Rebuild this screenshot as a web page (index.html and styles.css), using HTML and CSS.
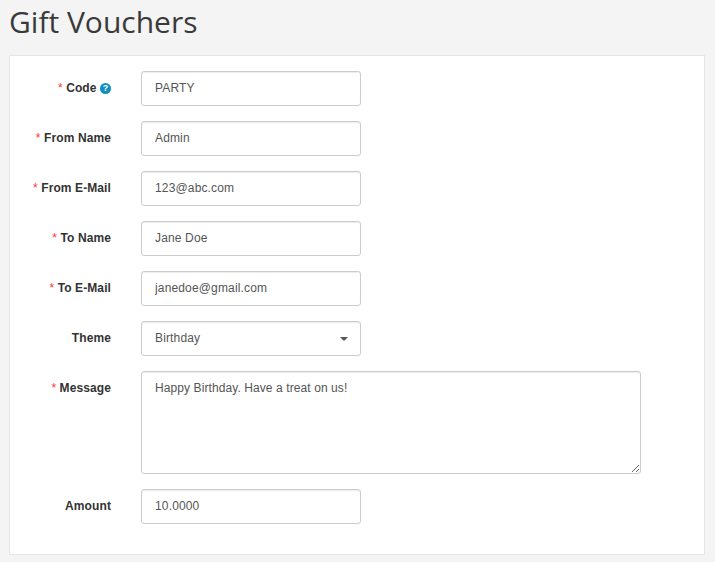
FILE: index.html
```html
<!DOCTYPE html>
<html lang="en">
<head>
  <meta charset="UTF-8" />
  <meta name="viewport" content="width=device-width, initial-scale=1.0" />
  <title>Gift Vouchers</title>
  <link rel="stylesheet" href="styles.css">
</head>
<body>
  <h1>Gift Vouchers</h1>
  <form class="panel">
    <div class="form-group">
      <label class="required" for="code">Code <span class="help">?</span></label>
      <input type="text" id="code" value="PARTY" />
    </div>
    <div class="form-group">
      <label class="required" for="fromName">From Name</label>
      <input type="text" id="fromName" value="Admin" />
    </div>
    <div class="form-group">
      <label class="required" for="fromEmail">From E-Mail</label>
      <input type="text" id="fromEmail" value="123@abc.com" />
    </div>
    <div class="form-group">
      <label class="required" for="toName">To Name</label>
      <input type="text" id="toName" value="Jane Doe" />
    </div>
    <div class="form-group">
      <label class="required" for="toEmail">To E-Mail</label>
      <input type="text" id="toEmail" value="janedoe@gmail.com" />
    </div>
    <div class="form-group">
      <label for="theme">Theme</label>
      <div class="select-wrap">
        <select id="theme">
          <option>Birthday</option>
        </select>
      </div>
    </div>
    <div class="form-group">
      <label class="required" for="message">Message</label>
      <textarea id="message">Happy Birthday. Have a treat on us!</textarea>
    </div>
    <div class="form-group">
      <label for="amount">Amount</label>
      <input type="text" id="amount" value="10.0000" />
    </div>
  </form>
</body>
</html>
```

FILE: styles.css
```css
* {
  box-sizing: border-box;
}
html, body {
  height: 100%;
  overflow: hidden;
}
body {
  margin: 0;
  padding: 0 10px 0 9px;
  background: #f4f4f4;
  font-family: "Liberation Sans", Arial, sans-serif;
  font-size: 12px;
  color: #4d4d4d;
}
h1 {
  margin: 0;
  height: 55px;
  padding-top: 2px;
  font-family: "Open Sans", sans-serif;
  font-size: 30px;
  font-weight: 400;
  line-height: 40px;
  color: #3a3a3a;
}
.panel {
  height: 500px;
  padding: 15px 0 0;
  background: #fff;
  border: 1px solid #e5e5e5;
}
.form-group {
  display: flex;
  align-items: flex-start;
  margin-bottom: 15px;
}
label {
  flex: none;
  width: 101px;
  margin-right: 30px;
  padding-top: 9px;
  line-height: 16px;
  text-align: right;
  font-weight: 700;
  letter-spacing: 0.1px;
  color: #333;
}
.required::before {
  content: "* ";
  font-weight: 400;
  color: #f33;
}
.help {
  display: inline-block;
  width: 11px;
  height: 11px;
  border-radius: 50%;
  background: #0f8fbb;
  color: #fff;
  font-size: 9px;
  line-height: 11px;
  letter-spacing: 0;
  text-align: center;
  vertical-align: 1px;
}
input[type="text"],
select,
textarea {
  display: block;
  width: 220px;
  height: 35px;
  padding: 0 13px 2px;
  background: #fff;
  border: 1px solid #ccc;
  border-radius: 3px;
  box-shadow: inset 0 1px 1px rgba(0, 0, 0, 0.075);
  font-family: inherit;
  font-size: 12px;
  letter-spacing: 0.15px;
  color: #555;
  outline: none;
}
select {
  appearance: none;
  -webkit-appearance: none;
}
.select-wrap {
  position: relative;
}
.select-wrap::after {
  content: "";
  position: absolute;
  top: 16px;
  right: 13px;
  border-left: 4px solid transparent;
  border-right: 4px solid transparent;
  border-top: 4px solid #555;
}
textarea {
  width: 500px;
  height: 103px;
  padding: 8px 13px;
  line-height: 16px;
  letter-spacing: 0.09px;
  resize: vertical;
}
```
